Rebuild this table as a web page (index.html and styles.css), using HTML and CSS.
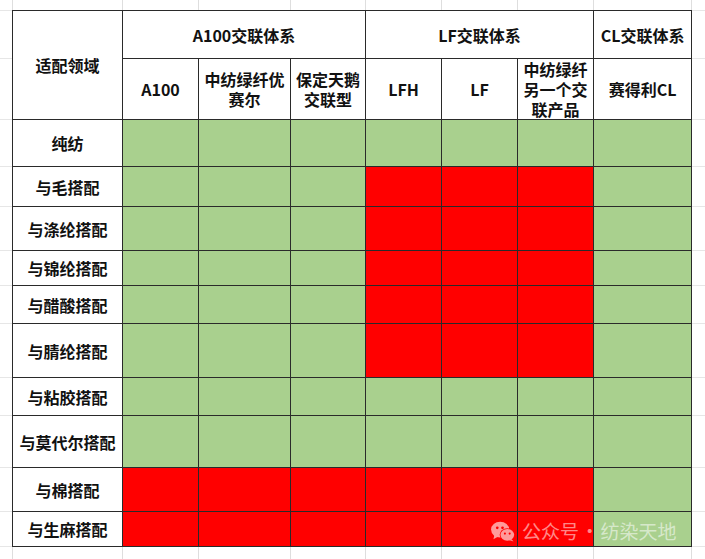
FILE: index.html
```html
<!DOCTYPE html>
<html lang="zh">
<head>
<meta charset="utf-8">
<title>交联体系适配领域</title>
<link rel="stylesheet" href="styles.css">
</head>
<body>
<div class="sheet">
  <table class="grid">
    <colgroup>
      <col class="c-label">
      <col class="c-a100">
      <col class="c-zf">
      <col class="c-bd">
      <col class="c-lfh">
      <col class="c-lf">
      <col class="c-other">
      <col class="c-cl">
    </colgroup>
    <tr class="h48">
      <td rowspan="2">适配领域</td>
      <td colspan="3">A100交联体系</td>
      <td colspan="3">LF交联体系</td>
      <td>CL交联体系</td>
    </tr>
    <tr class="h61">
      <td>A100</td>
      <td>中纺绿纤优<br>赛尔</td>
      <td>保定天鹅<br>交联型</td>
      <td>LFH</td>
      <td>LF</td>
      <td>中纺绿纤<br>另一个交<br>联产品</td>
      <td>赛得利CL</td>
    </tr>
    <tr class="h47">
      <td>纯纺</td>
      <td class="g"></td><td class="g"></td><td class="g"></td>
      <td class="g"></td><td class="g"></td><td class="g"></td>
      <td class="g"></td>
    </tr>
    <tr class="h40">
      <td>与毛搭配</td>
      <td class="g"></td><td class="g"></td><td class="g"></td>
      <td class="r"></td><td class="r"></td><td class="r"></td>
      <td class="g"></td>
    </tr>
    <tr class="h44">
      <td>与涤纶搭配</td>
      <td class="g"></td><td class="g"></td><td class="g"></td>
      <td class="r"></td><td class="r"></td><td class="r"></td>
      <td class="g"></td>
    </tr>
    <tr class="h35">
      <td>与锦纶搭配</td>
      <td class="g"></td><td class="g"></td><td class="g"></td>
      <td class="r"></td><td class="r"></td><td class="r"></td>
      <td class="g"></td>
    </tr>
    <tr class="h38">
      <td>与醋酸搭配</td>
      <td class="g"></td><td class="g"></td><td class="g"></td>
      <td class="r"></td><td class="r"></td><td class="r"></td>
      <td class="g"></td>
    </tr>
    <tr class="h54">
      <td>与腈纶搭配</td>
      <td class="g"></td><td class="g"></td><td class="g"></td>
      <td class="r"></td><td class="r"></td><td class="r"></td>
      <td class="g"></td>
    </tr>
    <tr class="h38">
      <td>与粘胶搭配</td>
      <td class="g"></td><td class="g"></td><td class="g"></td>
      <td class="g"></td><td class="g"></td><td class="g"></td>
      <td class="g"></td>
    </tr>
    <tr class="h52">
      <td>与莫代尔搭配</td>
      <td class="g"></td><td class="g"></td><td class="g"></td>
      <td class="g"></td><td class="g"></td><td class="g"></td>
      <td class="g"></td>
    </tr>
    <tr class="h44">
      <td>与棉搭配</td>
      <td class="r"></td><td class="r"></td><td class="r"></td>
      <td class="r"></td><td class="r"></td><td class="r"></td>
      <td class="g"></td>
    </tr>
    <tr class="h35">
      <td>与生麻搭配</td>
      <td class="r"></td><td class="r"></td><td class="r"></td>
      <td class="r"></td><td class="r"></td><td class="r"></td>
      <td class="g"></td>
    </tr>
  </table>
  <div class="watermark">
    <svg class="wm-icon" width="26" height="21" viewBox="0 0 26 22">
      <ellipse cx="10" cy="9" rx="9.5" ry="8.2" fill="currentColor"/>
      <path d="M4 14.5 L3 19 L8 16.2 Z" fill="currentColor"/>
      <ellipse cx="17.5" cy="14.5" rx="8" ry="6.8" fill="#ff0000" />
      <ellipse cx="17.5" cy="14.5" rx="7.2" ry="6.1" fill="currentColor"/>
      <path d="M22 19 L24 21.5 L19.5 20 Z" fill="currentColor"/>
      <circle cx="7" cy="7.2" r="1.4" fill="#ff0000"/>
      <circle cx="12.5" cy="7.2" r="1.4" fill="#ff0000"/>
      <circle cx="15" cy="13.2" r="1.1" fill="#ff0000"/>
      <circle cx="20" cy="13.2" r="1.1" fill="#ff0000"/>
    </svg>
    <span class="wm-text">公众号 · 纺染天地</span>
  </div>
</div>
</body>
</html>
```

FILE: styles.css
```css
html, body {
  margin: 0;
  padding: 0;
}

body {
  width: 705px;
  height: 559px;
  overflow: hidden;
  background-color: #ffffff;
  background-repeat: no-repeat;
  background-image:
    linear-gradient(#dedede, #dedede),
    linear-gradient(#dedede, #dedede),
    linear-gradient(#dedede, #dedede),
    linear-gradient(#dedede, #dedede),
    linear-gradient(#dedede, #dedede),
    linear-gradient(#dedede, #dedede),
    linear-gradient(#dedede, #dedede),
    linear-gradient(#dedede, #dedede),
    linear-gradient(#dedede, #dedede),
    linear-gradient(#e6e6e6, #e6e6e6),
    linear-gradient(#e6e6e6, #e6e6e6),
    linear-gradient(#e6e6e6, #e6e6e6),
    linear-gradient(#e6e6e6, #e6e6e6),
    linear-gradient(#e6e6e6, #e6e6e6),
    linear-gradient(#e6e6e6, #e6e6e6),
    linear-gradient(#e6e6e6, #e6e6e6),
    linear-gradient(#e6e6e6, #e6e6e6),
    linear-gradient(#e6e6e6, #e6e6e6),
    linear-gradient(#e6e6e6, #e6e6e6),
    linear-gradient(#e6e6e6, #e6e6e6),
    linear-gradient(#e6e6e6, #e6e6e6),
    linear-gradient(#e6e6e6, #e6e6e6);
  background-size:
    1px 100%, 1px 100%, 1px 100%, 1px 100%, 1px 100%,
    1px 100%, 1px 100%, 1px 100%, 1px 100%,
    100% 1px, 100% 1px, 100% 1px, 100% 1px, 100% 1px,
    100% 1px, 100% 1px, 100% 1px, 100% 1px, 100% 1px,
    100% 1px, 100% 1px, 100% 1px;
  background-position:
    12px 0, 122px 0, 198px 0, 290px 0, 365px 0,
    441px 0, 517px 0, 593px 0, 691px 0,
    0 10px, 0 58px, 0 119px, 0 166px, 0 206px,
    0 250px, 0 285px, 0 323px, 0 377px, 0 415px,
    0 467px, 0 511px, 0 546px;
}

.sheet {
  position: relative;
  padding: 10px 0 0 12px;
}

.grid {
  border-collapse: collapse;
  table-layout: fixed;
  width: 680px;
  font-family: "Noto Sans CJK SC", "Noto Sans", sans-serif;
  font-size: 16px;
  font-weight: 700;
  color: #111;
  line-height: 20px;
}

.grid td {
  border: 1px solid #2a2a2a;
  padding: 0;
  text-align: center;
  vertical-align: middle;
  background: #ffffff;
}

.grid td.g { background: #a9d08e; }
.grid td.r { background: #ff0000; }

.c-label { width: 110px; }
.c-a100 { width: 76px; }
.c-zf { width: 92px; }
.c-bd { width: 75px; }
.c-lfh { width: 76px; }
.c-lf { width: 76px; }
.c-other { width: 76px; }
.c-cl { width: 98px; }

.h35 { height: 35px; }
.h38 { height: 38px; }
.h40 { height: 40px; }
.h44 { height: 44px; }
.h47 { height: 47px; }
.h48 { height: 48px; }
.h52 { height: 52px; }
.h54 { height: 54px; }
.h61 { height: 61px; }

.watermark {
  position: absolute;
  left: 490px;
  top: 519px;
  display: flex;
  align-items: center;
  gap: 6px;
}

.wm-icon {
  display: block;
  color: #ff9a9a;
}

.wm-text {
  font-family: "Noto Sans CJK SC", sans-serif;
  font-size: 19px;
  font-weight: 400;
  line-height: 24px;
  word-spacing: -3px;
  color: rgba(255, 255, 255, 0.55);
}
```
